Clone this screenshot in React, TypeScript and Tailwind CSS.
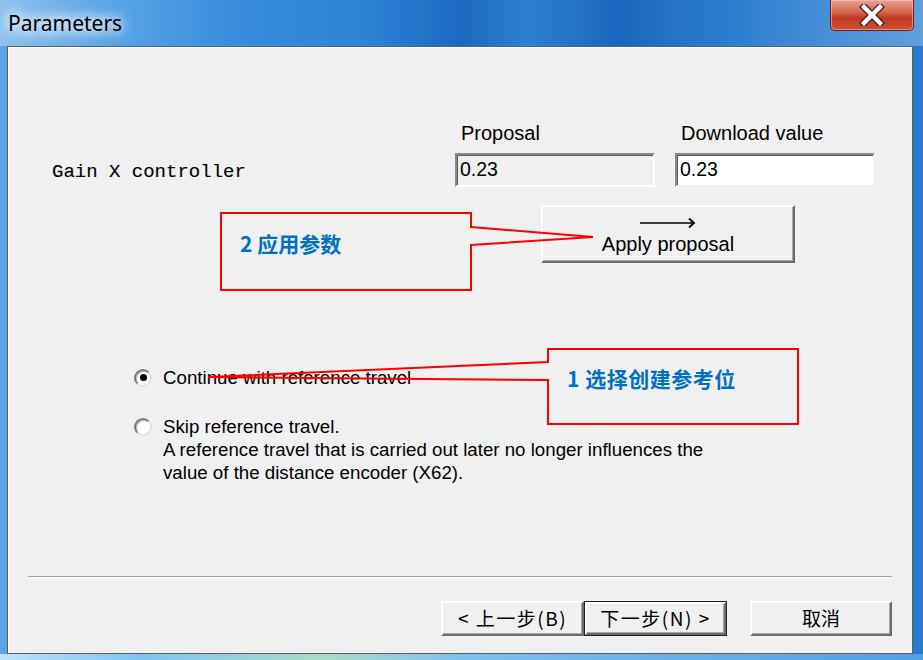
import React from "react"

function Radio({ checked }: { checked?: boolean }) {
    return (
        <div className="w-[18px] h-[18px] shrink-0 rounded-full border-2 border-t-[#7a7a7a] border-l-[#7a7a7a] border-r-[#e2e2e2] border-b-[#e2e2e2] bg-white flex items-center justify-center shadow-[inset_1px_1px_0_#b5b5b5]">
            {checked && <div className="w-[7px] h-[7px] rounded-full bg-black" />}
        </div>
    )
}

function WinButton({ children, isDefault, className = "" }: { children: React.ReactNode; isDefault?: boolean; className?: string }) {
    return (
        <div className={`${isDefault ? "border border-[#222]" : ""} ${className}`}>
            <div className="w-full h-full border-2 border-t-white border-l-white border-r-[#6b6b6b] border-b-[#6b6b6b] bg-[#f0f0f0] shadow-[inset_-1px_-1px_0_#a8a8a8] flex items-center justify-center">
                {children}
            </div>
        </div>
    )
}

function Callouts() {
    return (
        <>
            <svg className="absolute inset-0 pointer-events-none" width="923" height="660" viewBox="0 0 923 660">
                <polygon
                    points="221,213 471,213 471,227 593,237 471,245 471,290 221,290"
                    fill="none"
                    stroke="#ff0000"
                    strokeWidth="2"
                />
                <polygon
                    points="548,349 798,349 798,424 548,424 548,380 208,377 548,362"
                    fill="none"
                    stroke="#ff0000"
                    strokeWidth="2"
                />
            </svg>
            <div className="absolute left-[240px] top-[230px] text-[21px] leading-[26px] font-bold text-[#0070c0] font-['Noto_Sans_CJK_SC',sans-serif]">
                2 应用参数
            </div>
            <div className="absolute left-[567px] top-[365px] text-[21px] leading-[26px] font-bold text-[#0070c0] tracking-[0.5px] font-['Noto_Sans_CJK_SC',sans-serif]">
                1 选择创建参考位
            </div>
        </>
    )
}

export default function App() {
    return (
        <div className="relative w-[923px] h-[660px] overflow-hidden flex flex-col bg-[linear-gradient(90deg,#5aa3e6_0%,#3d90dc_30%,#2a7bd0_100%)] font-['Liberation_Sans',Arial,sans-serif]">
            {/* title bar */}
            <div className="h-[46px] shrink-0 flex items-start bg-[linear-gradient(90deg,#8fc2ee_0%,#5aa4e6_12%,#3a8ddc_25%,#2d82d6_40%,#1c68c0_50%,#2f80d2_57%,#1b66be_67%,#2f7fd0_80%,#5f9fdc_100%)]">
                <div className="pl-[8px] pt-[9px] text-[21px] leading-[28px] text-black font-['Noto_Sans',sans-serif] [text-shadow:0_0_10px_#fff,0_0_14px_#fff,0_0_18px_#e8f4ff]">
                    Parameters
                </div>
                <div className="ml-auto mr-[9px] w-[84px] h-[31px] rounded-b-[5px] border border-t-0 border-[#6b2318] bg-[linear-gradient(180deg,#e9a193_0%,#d6654f_40%,#c0391f_60%,#cf5234_100%)] shadow-[inset_0_0_0_1px_rgba(255,210,200,0.5)] flex items-center justify-center">
                    <svg width="26" height="22" viewBox="0 0 26 22">
                        <path d="M5 3 L21 19 M21 3 L5 19" stroke="#4a1a12" strokeWidth="7" strokeLinecap="square" />
                        <path d="M5 3 L21 19 M21 3 L5 19" stroke="#ffffff" strokeWidth="4.5" strokeLinecap="square" />
                    </svg>
                </div>
            </div>

            {/* client area */}
            <div className="ml-[7px] mr-[10px] h-[608px] shrink-0 border border-[#5f5f5f] bg-[#f0f0f0] shadow-[inset_1px_1px_0_#ffffff] flex flex-col text-black">
                <div className="mt-[75px] flex pl-[447px] gap-[20px] text-[20px] leading-[23px]">
                    <div className="w-[200px] pl-[6px]">Proposal</div>
                    <div className="w-[200px] pl-[6px]">Download value</div>
                </div>

                <div className="mt-[8px] flex items-center pl-[44px]">
                    <div className="w-[403px] pt-[4px] font-['Liberation_Mono','Courier_New',monospace] text-[19px] leading-[23px] [-webkit-text-stroke:0.12px_#000]">
                        Gain X controller
                    </div>
                    <div className="w-[200px] h-[34px] border-2 border-t-[#8a8a8a] border-l-[#8a8a8a] border-r-white border-b-white shadow-[inset_1px_1px_0_#5a5a5a] bg-[#f0f0f0] pl-[3px] flex items-center text-[19.5px]">
                        0.23
                    </div>
                    <div className="w-[20px]" />
                    <div className="w-[200px] h-[34px] border-2 border-t-[#8a8a8a] border-l-[#8a8a8a] border-r-[#f0f0f0] border-b-[#f0f0f0] shadow-[inset_1px_1px_0_#5a5a5a] bg-white pl-[3px] flex items-center text-[19.5px]">
                        0.23
                    </div>
                </div>

                <WinButton className="mt-[18px] ml-[533px] w-[254px] h-[58px]">
                    <div className="flex flex-col items-center pt-[4px]">
                        <svg width="56" height="12" viewBox="0 0 56 12">
                            <path d="M0 6 H54" stroke="#000" strokeWidth="1.5" />
                            <path d="M49 1.5 L54 6 L49 10.5" stroke="#000" strokeWidth="1.8" fill="none" />
                        </svg>
                        <div className="text-[20px] leading-[23px] mt-[4px]">Apply proposal</div>
                    </div>
                </WinButton>

                <div className="mt-[103px] ml-[126px] flex flex-col text-[18.7px] leading-[23px]">
                    <div className="flex items-center gap-[11px] h-[23px]">
                        <Radio checked />
                        <div>Continue with reference travel</div>
                    </div>
                    <div className="mt-[26px] flex items-start gap-[11px]">
                        <div className="h-[23px] flex items-center">
                            <Radio />
                        </div>
                        <div>
                            <div>Skip reference travel.</div>
                            <div>A reference travel that is carried out later no longer influences the</div>
                            <div>value of the distance encoder (X62).</div>
                        </div>
                    </div>
                </div>

                <div className="mt-auto mx-[20px] h-[2px] border-t border-t-[#a0a0a0] border-b border-b-white" />

                <div className="mt-[23px] mb-[17px] mr-[20px] flex justify-end font-['Noto_Sans_CJK_SC',sans-serif] text-[19px]">
                    <WinButton className="w-[143px] h-[35px]">
                        <span className="tracking-[1.5px]">&lt; 上一步(B)</span>
                    </WinButton>
                    <WinButton isDefault className="w-[143px] h-[35px]">
                        <span className="tracking-[1.5px]">下一步(N) &gt;</span>
                    </WinButton>
                    <WinButton className="ml-[23px] w-[142px] h-[35px]">
                        <span>取消</span>
                    </WinButton>
                </div>
            </div>

            {/* bottom frame */}
            <div className="flex-1 bg-[linear-gradient(90deg,#bfe3fb_0%,#7fc4f2_15%,#a9dcc8_35%,#7fc0ee_50%,#4f9fe4_100%)]" />

            <Callouts />
        </div>
    )
}
